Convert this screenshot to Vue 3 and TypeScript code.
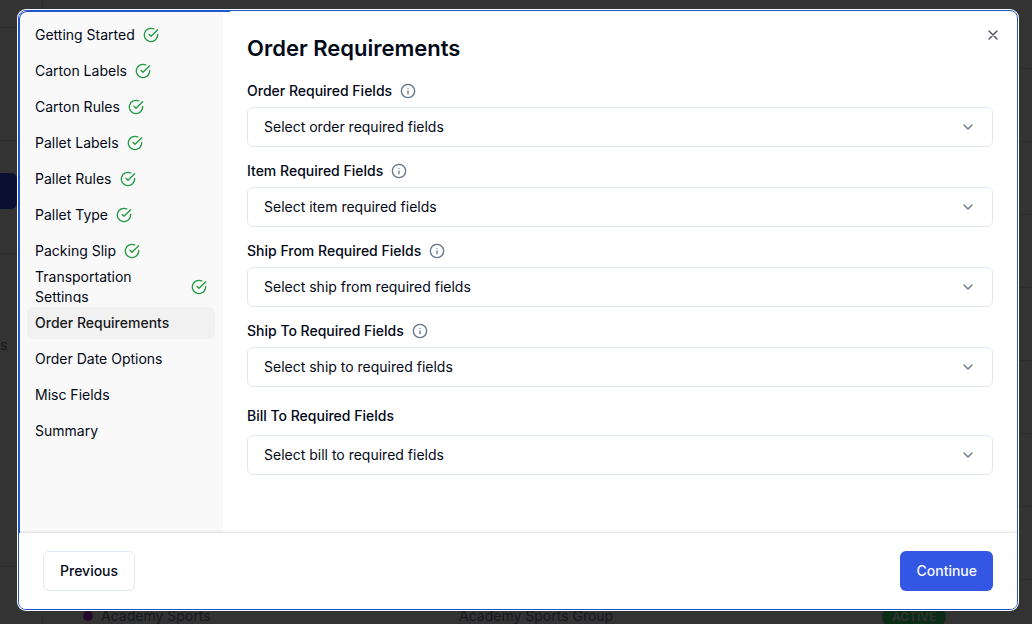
<script setup lang="ts">
import { ref } from 'vue'

interface Step { name: string; done: boolean }
interface Field { id: string; label: string; placeholder: string; info: boolean }

const steps: Step[] = [
  { name: 'Getting Started', done: true },
  { name: 'Carton Labels', done: true },
  { name: 'Carton Rules', done: true },
  { name: 'Pallet Labels', done: true },
  { name: 'Pallet Rules', done: true },
  { name: 'Pallet Type', done: true },
  { name: 'Packing Slip', done: true },
  { name: 'Transportation Settings', done: true },
  { name: 'Order Requirements', done: false },
  { name: 'Order Date Options', done: false },
  { name: 'Misc Fields', done: false },
  { name: 'Summary', done: false },
]

const fields: Field[] = [
  { id: 'order', label: 'Order Required Fields', placeholder: 'Select order required fields', info: true },
  { id: 'item', label: 'Item Required Fields', placeholder: 'Select item required fields', info: true },
  { id: 'ship-from', label: 'Ship From Required Fields', placeholder: 'Select ship from required fields', info: true },
  { id: 'ship-to', label: 'Ship To Required Fields', placeholder: 'Select ship to required fields', info: true },
  { id: 'bill-to', label: 'Bill To Required Fields', placeholder: 'Select bill to required fields', info: false },
]

const active = ref('Order Requirements')
</script>

<template>
  <div class="screen">
    <div class="page" aria-hidden="true">
      <div class="rail">
        <div class="rail-cell first"></div>
        <div class="rail-cell"></div>
        <div class="rail-cell"><span class="rail-button"></span></div>
        <div class="rail-cell tall"><span class="rail-text">s</span></div>
        <div class="rail-cell last"></div>
      </div>
      <div class="rows">
        <div v-for="n in 8" :key="n" class="row" :class="{ first: n === 1 }"></div>
        <div class="row final">
          <span class="company"><i class="dot"></i>Academy Sports</span>
          <span class="group">Academy Sports Group</span>
          <span class="status"><span class="badge">ACTIVE</span></span>
        </div>
      </div>
    </div>

    <div class="overlay">
      <section class="dialog" role="dialog" aria-labelledby="dialog-title">
        <div class="frame">
          <div class="body">
            <nav class="steps">
              <button
                v-for="step in steps"
                :key="step.name"
                type="button"
                class="step"
                :class="{ active: step.name === active }"
                @click="active = step.name"
              >
                <span>{{ step.name }}</span>
                <svg v-if="step.done" class="check" viewBox="0 0 24 24">
                  <path d="M22 11.08V12a10 10 0 1 1-5.93-9.14" />
                  <path d="m9 11 3 3L22 4" />
                </svg>
              </button>
            </nav>
            <main class="content">
              <h2 id="dialog-title">Order Requirements</h2>
              <div class="fields">
                <div v-for="field in fields" :key="field.id" class="field">
                  <div class="label-row" :class="{ plain: !field.info }">
                    <label :for="field.id">{{ field.label }}</label>
                    <svg v-if="field.info" class="info" viewBox="0 0 24 24">
                      <circle cx="12" cy="12" r="10" />
                      <path d="M12 16v-4M12 8h.01" />
                    </svg>
                  </div>
                  <div class="select-wrap">
                    <select :id="field.id">
                      <option>{{ field.placeholder }}</option>
                    </select>
                    <svg class="chevron" viewBox="0 0 24 24"><path d="m6 9 6 6 6-6" /></svg>
                  </div>
                </div>
              </div>
            </main>
          </div>
          <footer class="footer">
            <button type="button" class="btn outline">Previous</button>
            <button type="button" class="btn primary">Continue</button>
          </footer>
          <button type="button" class="close" aria-label="Close">
            <svg viewBox="0 0 24 24"><path d="M18 6 6 18M6 6l12 12" /></svg>
          </button>
        </div>
      </section>
    </div>
  </div>
</template>

<style>
body {
  margin: 0;
  background: #333333;
}
</style>

<style scoped>
* {
  box-sizing: border-box;
}
.screen {
  position: relative;
  min-height: 100vh;
  overflow: hidden;
  font-family: Inter, "Liberation Sans", sans-serif;
  font-size: 14px;
  line-height: 20px;
  color: #020817;
}
button,
select {
  font: inherit;
  color: inherit;
}
svg {
  display: block;
  flex: none;
  width: 16px;
  height: 16px;
  fill: none;
  stroke: currentColor;
  stroke-width: 2;
  stroke-linecap: round;
  stroke-linejoin: round;
}

/* Dimmed page behind the dialog */
.page {
  position: absolute;
  inset: 0;
  display: flex;
  overflow: hidden;
  background: #333333;
  color: #16181d;
}
.rail {
  flex: none;
  width: 43px;
  border-right: 1px solid #2d2d2e;
}
.rail-cell {
  height: 113px;
  border-bottom: 1px solid #2d2d2e;
}
.rail-cell.first {
  height: 28px;
}
.rail-cell.tall {
  height: 313px;
  padding-top: 81px;
}
.rail-cell.last {
  border: 0;
}
.rail-button {
  display: block;
  width: 17px;
  height: 36px;
  border-radius: 0 6px 6px 0;
  background: #0a1130;
}
.rail-cell:has(.rail-button) {
  padding-top: 32px;
}
.rows {
  flex: 1;
}
.row {
  height: 73px;
  border-bottom: 1px solid #2d2d2e;
}
.row.first {
  height: 69px;
}
.row.final {
  display: grid;
  grid-template-columns: 416px 423px 1fr;
  align-items: center;
}
.company {
  display: flex;
  align-items: center;
  gap: 8px;
  padding-left: 40px;
}
.dot {
  width: 10px;
  height: 10px;
  border-radius: 50%;
  background: #250a2b;
}
.badge {
  display: inline-block;
  padding: 0 10px;
  border-radius: 10px;
  background: #0b2d17;
  color: #333333;
  font-size: 12px;
  font-weight: 600;
}

/* Dialog */
.overlay {
  position: relative;
  display: flex;
  min-height: 100vh;
  padding: 9px 13px 13px 17px;
}
.dialog {
  flex: 1;
  display: flex;
  padding: 1px;
  border-radius: 9px;
  background: #ffffff;
}
.frame {
  position: relative;
  flex: 1;
  display: flex;
  flex-direction: column;
  overflow: hidden;
  border: 1px solid #2156c8;
  border-radius: 8px;
}
.body {
  position: relative;
  flex: 1;
  display: flex;
}
.body::before {
  content: "";
  position: absolute;
  inset: 0 auto 0 0;
  width: 210px;
  border-top: 1px solid #2156c8;
  border-left: 1px solid #2156c8;
  border-top-left-radius: 8px;
  pointer-events: none;
}
.steps {
  flex: none;
  display: flex;
  flex-direction: column;
  gap: 4px;
  width: 204px;
  padding: 8px;
  background: #f9f9f9;
}
.step {
  display: flex;
  align-items: center;
  gap: 8px;
  height: 32px;
  padding: 0 8px;
  overflow: hidden;
  border: 0;
  border-radius: 6px;
  background: none;
  text-align: left;
}
.step.active {
  background: #f1f1f1;
  color: #18181b;
  font-weight: 500;
}
.check {
  color: #229a43;
}
.content {
  flex: 1;
  padding: 24px;
}
h2 {
  margin: 0 0 22px;
  font-size: 22px;
  line-height: 26px;
  font-weight: 600;
}
.fields {
  display: flex;
  flex-direction: column;
  gap: 16px;
}
.label-row {
  display: flex;
  align-items: center;
  gap: 8px;
  height: 16px;
  margin-bottom: 8px;
  font-weight: 500;
}
.label-row.plain {
  height: 26px;
  margin-bottom: 6px;
}
.info {
  color: #64748b;
}
.select-wrap {
  display: grid;
  align-items: center;
}
select {
  grid-area: 1 / 1;
  width: 100%;
  height: 40px;
  padding: 0 40px 0 16px;
  border: 1px solid #e2e8f0;
  border-radius: 6px;
  background: #ffffff;
  appearance: none;
}
.chevron {
  grid-area: 1 / 1;
  justify-self: end;
  margin-right: 17px;
  color: #64748b;
  pointer-events: none;
}
.footer {
  display: flex;
  justify-content: space-between;
  padding: 18px 24px;
  background: #ffffff;
  box-shadow: 0 -1px 2px rgba(0, 0, 0, 0.12);
  position: relative;
}
.btn {
  height: 40px;
  padding: 0 16px;
  border: 1px solid #e2e8f0;
  border-radius: 6px;
  background: #ffffff;
  font-weight: 500;
}
.btn.primary {
  border: 0;
  background: #3356e4;
  color: #f8fafc;
}
.close {
  position: absolute;
  top: 16px;
  right: 16px;
  padding: 0;
  border: 0;
  background: none;
  color: #4b4f5a;
}
</style>
